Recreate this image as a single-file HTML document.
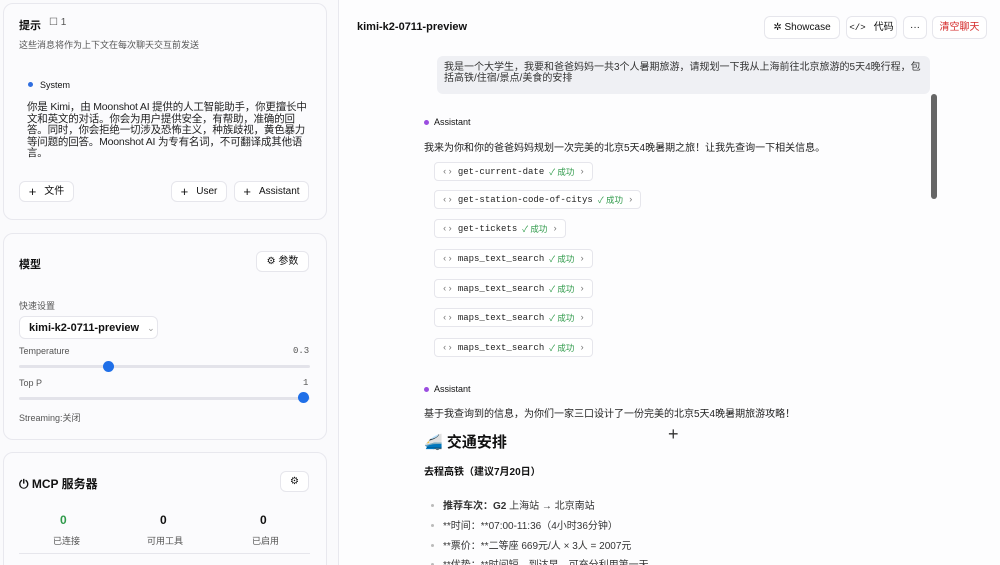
<!DOCTYPE html>
<html><head><meta charset="utf-8"><style>
*{margin:0;padding:0;box-sizing:border-box}
html,body{width:1000px;height:565px;overflow:hidden}
body{background:#fafafc;font-family:"Liberation Sans","Noto Sans CJK SC",sans-serif;color:#111;position:relative}
.a{position:absolute}
.card{position:absolute;background:#fbfbfd;border:1px solid #e8e8ee;border-radius:10px}
.btn{position:absolute;border:1px solid #e6e6ec;border-radius:6px;background:#fff;font-size:10px;line-height:10px;display:flex;align-items:center;justify-content:center;gap:8px}
.btn .p{font-size:13px;line-height:10px}
.mono{font-family:"Liberation Mono","Noto Sans CJK SC",monospace}
.tool{position:absolute;left:434px;height:19px;border:1px solid #e6e6ec;border-radius:4px;background:#fff;font-size:9px;display:flex;align-items:center;padding:0 7px;gap:5px;color:#222}
.tool .ok{color:#2f9a4a;font-family:"Liberation Sans","Noto Sans CJK SC",sans-serif;font-size:8.5px}
.tool .g{color:#777}
.track{position:absolute;left:19px;width:291px;height:3px;background:#e3e3ea;border-radius:2px}
.knob{position:absolute;width:11px;height:11px;border-radius:50%;background:#1f6fe8}
.li{position:absolute;left:443px;font-size:10px;color:#333}
.dot{position:absolute;left:431px;width:3px;height:3px;border-radius:50%;background:#bbb}
</style></head><body>
<div class="card" style="left:3px;top:3px;width:324px;height:217px"></div>
<div class="a" style="left:19px;top:17px;font-size:11px;font-weight:bold">提示</div>
<div class="a" style="left:49px;top:17px;font-size:10px;color:#555">☐ 1</div>
<div class="a" style="left:19px;top:38px;font-size:9px;color:#555">这些消息将作为上下文在每次聊天交互前发送</div>
<div class="a" style="left:28px;top:82px;width:5px;height:5px;border-radius:50%;background:#2f6ee0"></div>
<div class="a" style="left:40px;top:80px;font-size:9px">System</div>
<div class="a" style="left:27px;top:102px;width:282px;font-size:10.5px;line-height:11.5px;color:#222;letter-spacing:-0.2px">你是 Kimi，由 Moonshot AI 提供的人工智能助手，你更擅长中文和英文的对话。你会为用户提供安全，有帮助，准确的回答。同时，你会拒绝一切涉及恐怖主义，种族歧视，黄色暴力等问题的回答。Moonshot AI 为专有名词，不可翻译成其他语言。</div>
<div class="btn" style="left:19px;top:181px;width:55px;height:21px"><span class="p">+</span>文件</div>
<div class="btn" style="left:171px;top:181px;width:56px;height:21px"><span class="p">+</span>User</div>
<div class="btn" style="left:234px;top:181px;width:75px;height:21px"><span class="p">+</span>Assistant</div>

<div class="card" style="left:3px;top:233px;width:324px;height:207px"></div>
<div class="a" style="left:19px;top:256px;font-size:11px;font-weight:bold">模型</div>
<div class="btn" style="left:256px;top:251px;width:53px;height:21px">⚙ 参数</div>
<div class="a" style="left:19px;top:299px;font-size:9px;color:#555">快速设置</div>
<div class="btn" style="left:19px;top:316px;width:139px;height:23px;justify-content:flex-start;padding-left:9px;font-size:11px;font-weight:bold">kimi-k2-0711-preview <span style="color:#999;font-weight:normal;font-size:9px">⌄</span></div>
<div class="a" style="left:19px;top:346px;font-size:9px;color:#555">Temperature</div>
<div class="a mono" style="left:293px;top:346px;font-size:9px;color:#555">0.3</div>
<div class="track" style="top:365px"></div><div class="knob" style="left:103px;top:361px"></div>
<div class="a" style="left:19px;top:378px;font-size:9px;color:#555">Top P</div>
<div class="a mono" style="left:303px;top:378px;font-size:9px;color:#555">1</div>
<div class="track" style="top:397px"></div><div class="knob" style="left:298px;top:392px"></div>
<div class="a" style="left:19px;top:411px;font-size:9px;color:#555">Streaming:关闭</div>

<div class="card" style="left:3px;top:452px;width:324px;height:130px"></div>
<div class="a" style="left:19px;top:475px;font-size:12px;font-weight:bold">⏻ MCP 服务器</div>
<div class="btn" style="left:280px;top:471px;width:29px;height:21px">⚙</div>
<div class="a" style="left:60px;top:513px;font-size:12px;font-weight:bold;color:#2f9a4a">0</div>
<div class="a" style="left:53px;top:534px;font-size:9px;color:#555">已连接</div>
<div class="a" style="left:160px;top:513px;font-size:12px;font-weight:bold">0</div>
<div class="a" style="left:147px;top:534px;font-size:9px;color:#555">可用工具</div>
<div class="a" style="left:260px;top:513px;font-size:12px;font-weight:bold">0</div>
<div class="a" style="left:252px;top:534px;font-size:9px;color:#555">已启用</div>
<div class="a" style="left:19px;top:553px;width:291px;height:1px;background:#e6e6ec"></div>

<div class="a" style="left:338px;top:0;width:1px;height:565px;background:#e8e8ee"></div>
<div class="a" style="left:339px;top:0;width:661px;height:565px;background:#fdfdfe"></div>
<div class="a" style="left:357px;top:21px;font-size:11px;font-weight:bold">kimi-k2-0711-preview</div>
<div class="btn" style="left:764px;top:16px;width:76px;height:23px">✲ Showcase</div>
<div class="btn" style="left:846px;top:16px;width:51px;height:23px"><span class="mono" style="font-size:9px">&lt;/&gt;</span>代码</div>
<div class="btn" style="left:903px;top:16px;width:24px;height:23px">···</div>
<div class="btn" style="left:932px;top:16px;width:55px;height:23px;color:#d42a2a">清空聊天</div>
<div class="a" style="left:437px;top:56px;width:493px;height:38px;background:#eff0f4;border-radius:6px"></div>
<div class="a" style="left:444px;top:62px;width:480px;font-size:10px;line-height:11px;color:#333">我是一个大学生，我要和爸爸妈妈一共3个人暑期旅游，请规划一下我从上海前往北京旅游的5天4晚行程，包括高铁/住宿/景点/美食的安排</div>
<div class="a" style="left:931px;top:94px;width:6px;height:105px;background:#666;border-radius:3px"></div>

<div class="a" style="left:424px;top:120px;width:5px;height:5px;border-radius:50%;background:#9b4de0"></div>
<div class="a" style="left:434px;top:117px;font-size:9px">Assistant</div>
<div class="a" style="left:424px;top:139px;font-size:10px;color:#222">我来为你和你的爸爸妈妈规划一次完美的北京5天4晚暑期之旅！让我先查询一下相关信息。</div>
<div class="tool mono" style="top:162px"><span class="g">‹›</span>get-current-date<span class="ok">✓ 成功</span><span class="g">›</span></div>
<div class="tool mono" style="top:190px"><span class="g">‹›</span>get-station-code-of-citys<span class="ok">✓ 成功</span><span class="g">›</span></div>
<div class="tool mono" style="top:219px"><span class="g">‹›</span>get-tickets<span class="ok">✓ 成功</span><span class="g">›</span></div>
<div class="tool mono" style="top:249px"><span class="g">‹›</span>maps_text_search<span class="ok">✓ 成功</span><span class="g">›</span></div>
<div class="tool mono" style="top:279px"><span class="g">‹›</span>maps_text_search<span class="ok">✓ 成功</span><span class="g">›</span></div>
<div class="tool mono" style="top:308px"><span class="g">‹›</span>maps_text_search<span class="ok">✓ 成功</span><span class="g">›</span></div>
<div class="tool mono" style="top:338px"><span class="g">‹›</span>maps_text_search<span class="ok">✓ 成功</span><span class="g">›</span></div>

<div class="a" style="left:424px;top:387px;width:5px;height:5px;border-radius:50%;background:#9b4de0"></div>
<div class="a" style="left:434px;top:384px;font-size:9px">Assistant</div>
<div class="a" style="left:424px;top:405px;font-size:10px;color:#222">基于我查询到的信息，为你们一家三口设计了一份完美的北京5天4晚暑期旅游攻略！</div>
<div class="a" style="left:668px;top:424px;font-size:18px;color:#333;font-weight:300">+</div>
<div class="a" style="left:424px;top:431px;font-size:15px;font-weight:bold">🚄 交通安排</div>
<div class="a" style="left:424px;top:463px;font-size:10px;font-weight:bold">去程高铁（建议7月20日）</div>
<div class="dot" style="top:504px"></div><div class="li" style="top:497px"><b>推荐车次：G2</b> 上海站 → 北京南站</div>
<div class="dot" style="top:524px"></div><div class="li" style="top:517px">**时间：**07:00-11:36（4小时36分钟）</div>
<div class="dot" style="top:544px"></div><div class="li" style="top:537px">**票价：**二等座 669元/人 × 3人 = 2007元</div>
<div class="dot" style="top:563px"></div><div class="li" style="top:556px">**优势：**时间短，到达早，可充分利用第一天</div>
</body></html>
